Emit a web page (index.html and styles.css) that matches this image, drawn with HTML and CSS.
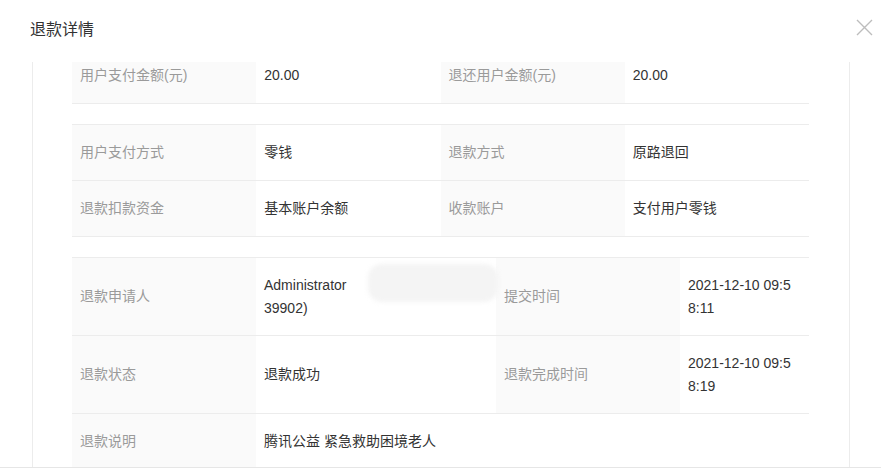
FILE: index.html
```html
<!DOCTYPE html>
<html lang="zh-CN">
<head>
    <meta charset="UTF-8">
    <title>退款详情</title>
    <link rel="stylesheet" href="styles.css">
</head>
<body>
    <div class="dialog">
        <div class="dialog-header">
            <h2>退款详情</h2>
            <span class="close">
                <svg width="17" height="17" viewBox="0 0 17 17"><path d="M1 1L16 16M16 1L1 16" stroke="#bdbdbd" stroke-width="1.4" fill="none"/></svg>
            </span>
        </div>

        <div class="dialog-body">
            <div class="card">
                <table class="info">
                    <colgroup><col class="c1"><col class="c2"><col class="c3"><col class="c4"></colgroup>
                    <tr>
                        <td class="label">用户支付金额(元)</td>
                        <td>20.00</td>
                        <td class="label">退还用户金额(元)</td>
                        <td>20.00</td>
                    </tr>
                </table>

                <table class="info">
                    <colgroup><col class="c1"><col class="c2"><col class="c3"><col class="c4"></colgroup>
                    <tr>
                        <td class="label">用户支付方式</td>
                        <td>零钱</td>
                        <td class="label">退款方式</td>
                        <td>原路退回</td>
                    </tr>
                    <tr>
                        <td class="label">退款扣款资金</td>
                        <td>基本账户余额</td>
                        <td class="label">收款账户</td>
                        <td>支付用户零钱</td>
                    </tr>
                </table>

                <table class="info info-apply">
                    <colgroup><col class="c1"><col class="w2"><col class="c3"><col class="w4"></colgroup>
                    <tr>
                        <td class="label">退款申请人</td>
                        <td><div class="who">Administrator<br>39902)<span class="masked"></span></div></td>
                        <td class="label">提交时间</td>
                        <td class="time">2021-12-10 09:58:11</td>
                    </tr>
                    <tr>
                        <td class="label">退款状态</td>
                        <td>退款成功</td>
                        <td class="label">退款完成时间</td>
                        <td class="time">2021-12-10 09:58:19</td>
                    </tr>
                    <tr>
                        <td class="label">退款说明</td>
                        <td colspan="3">腾讯公益 紧急救助困境老人</td>
                    </tr>
                </table>
            </div>
        </div>
        <div class="dialog-footer"></div>
    </div>
</body>
</html>
```

FILE: styles.css
```css
body {
    margin: 0;
    background: #fff;
    font-family: "Liberation Sans", Arial, "Noto Sans CJK SC", sans-serif;
    font-size: 14px;
    color: #333;
}
.dialog {
    width: 881px;
    height: 473px;
    overflow: hidden;
}
.dialog-header {
    height: 62px;
    display: flex;
    align-items: center;
    justify-content: space-between;
    padding: 0 8px 6px 30px;
    box-sizing: border-box;
}
.dialog-header h2 {
    margin: 0;
    font-size: 16px;
    font-weight: normal;
    color: #333;
}
.close {
    display: flex;
    margin-top: -2px;
}
.dialog-body {
    height: 405px;
    overflow: hidden;
    padding: 0 31px 0 32px;
}
.card {
    margin-top: -14px;
    border-left: 1px solid #ececec;
    border-right: 1px solid #ececec;
    padding: 0 39px 20px;
}
.info {
    width: 737px;
    table-layout: fixed;
    border-collapse: collapse;
    border-top: 1px solid #ececec;
    margin-top: 20px;
}
.info:first-child {
    margin-top: 0;
    border-top: none;
}
.info col.c1, .info col.c2, .info col.c3, .info col.c4 {
    width: 184px;
}
.info col.w2 {
    width: 240px;
}
.info col.w4 {
    width: 129px;
}
.info td {
    padding: 16px 8px;
    line-height: 23px;
    border-bottom: 1px solid #ececec;
    vertical-align: middle;
    color: #333;
}
.info-apply td {
    padding-top: 15.5px;
    padding-bottom: 15.5px;
}
.info td.label {
    background: #fafafa;
    color: #9a9a9a;
}
.info td.time {
    padding-right: 18px;
    word-break: break-all;
}
.who {
    position: relative;
}
.masked {
    position: absolute;
    left: 104px;
    top: -10px;
    width: 130px;
    height: 38px;
    background: #f4f4f4;
    border-radius: 14px;
    filter: blur(2px);
}
.dialog-footer {
    border-top: 1px solid #e6e6e6;
    height: 5px;
}
```
